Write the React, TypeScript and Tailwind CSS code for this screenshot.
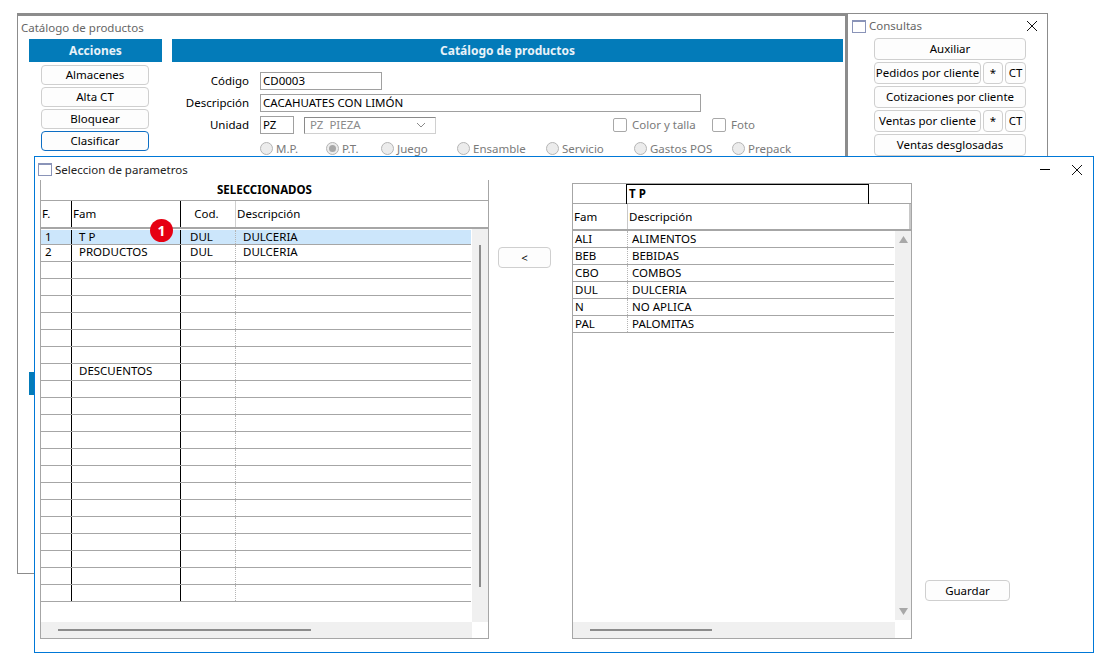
import React from 'react';

const acciones = ['Almacenes', 'Alta CT', 'Bloquear'];

const radios = [
  { label: 'M.P.', w: 'w-[66px]' },
  { label: 'P.T.', w: 'w-[55px]', checked: true },
  { label: 'Juego', w: 'w-[76px]' },
  { label: 'Ensamble', w: 'w-[89px]' },
  { label: 'Servicio', w: 'w-[88px]' },
  { label: 'Gastos POS', w: 'w-[98px]' },
  { label: 'Prepack', w: 'w-[70px]' },
];

const selRows = [
  { f: '1', fam: 'T P', cod: 'DUL', desc: 'DULCERIA' },
  { f: '2', fam: 'PRODUCTOS', cod: 'DUL', desc: 'DULCERIA' },
  { f: '', fam: '', cod: '', desc: '' },
  { f: '', fam: '', cod: '', desc: '' },
  { f: '', fam: '', cod: '', desc: '' },
  { f: '', fam: '', cod: '', desc: '' },
  { f: '', fam: '', cod: '', desc: '' },
  { f: '', fam: '', cod: '', desc: '' },
  { f: '', fam: 'DESCUENTOS', cod: '', desc: '' },
  ...Array.from({ length: 13 }, () => ({ f: '', fam: '', cod: '', desc: '' })),
];

const familias = [
  ['ALI', 'ALIMENTOS'],
  ['BEB', 'BEBIDAS'],
  ['CBO', 'COMBOS'],
  ['DUL', 'DULCERIA'],
  ['N', 'NO APLICA'],
  ['PAL', 'PALOMITAS'],
];

function Btn({ children, className = '' }: { children: React.ReactNode; className?: string }) {
  return (
    <div className={`flex items-center justify-center rounded-[4px] border border-[#cfcfcf] bg-[#fdfdfd] text-black ${className}`}>
      {children}
    </div>
  );
}

function Radio({ label, w, checked }: { label: string; w: string; checked?: boolean }) {
  return (
    <div className={`flex items-center gap-[3px] ${w}`}>
      <span className="flex h-[13px] w-[13px] items-center justify-center rounded-full border border-[#b5b5b5] bg-[#ececec]">
        {checked && <span className="h-[7px] w-[7px] rounded-full bg-[#a8a8a8]" />}
      </span>
      <span>{label}</span>
    </div>
  );
}

function WinIcon() {
  return <span className="h-[13px] w-[14px] border border-[#8a94b8] border-t-2 bg-white" />;
}

function CloseX({ size = 12 }: { size?: number }) {
  return (
    <svg width={size} height={size} viewBox="0 0 12 12" stroke="#111" strokeWidth="1" fill="none">
      <path d="M1 1 L11 11 M11 1 L1 11" />
    </svg>
  );
}

export default function App() {
  return (
    <div className="relative h-[662px] w-[1113px] overflow-hidden bg-white font-['Noto_Sans',sans-serif] text-[11.5px] text-black">
      {/* ventana de atras */}
      <div className="absolute left-[17px] top-[13px] h-[561px] w-[830px] border-b border-l border-r-2 border-t-[3px] border-[#8c8c8c] bg-white">
        <div className="h-[23px] pl-[3px] pt-[4px] leading-[16px] text-[#666]">Catálogo de productos</div>
        <div className="flex gap-[10px] pl-[11px]">
          <div className="w-[133px]">
            <div className="flex h-[23px] items-center justify-center bg-[#037bb9] text-[12px] font-bold text-[#e8f2f8]">Acciones</div>
            <div className="flex flex-col gap-[2px] pl-[12px] pt-[3px]">
              {acciones.map((a) => (
                <Btn key={a} className="h-[20px] w-[108px]">{a}</Btn>
              ))}
              <Btn className="h-[20px] w-[108px] !border-[#0d6ec4] bg-[#deecf9]">Clasificar</Btn>
            </div>
            <div className="mt-[221px] h-[23px] bg-[#037bb9]" />
          </div>
          <div className="w-[671px]">
            <div className="flex h-[23px] items-center justify-center bg-[#037bb9] text-[12px] font-bold text-[#e8f2f8]">Catálogo de productos</div>
            <div className="flex flex-col gap-[4px] pt-[10px]">
              <div className="flex items-center">
                <span className="w-[77px] text-right">Código</span>
                <span className="ml-[11px] h-[18px] w-[122px] border border-[#a0a0a0] pl-[2px] leading-[16px]">CD0003</span>
              </div>
              <div className="flex items-center">
                <span className="w-[77px] text-right">Descripción</span>
                <span className="ml-[11px] h-[18px] w-[441px] border border-[#a0a0a0] pl-[2px] leading-[16px]">CACAHUATES CON LIMÓN</span>
              </div>
              <div className="flex items-center">
                <span className="w-[77px] text-right">Unidad</span>
                <span className="ml-[11px] h-[18px] w-[34px] border border-[#a0a0a0] pl-[2px] leading-[16px]">PZ</span>
                <span className="ml-[10px] flex h-[17px] w-[132px] items-center justify-between border border-[#d0d0d0] border-l-[#8a8a8a] border-t-[#8a8a8a] pl-[5px] pr-[9px] text-[#8a8a8a]">
                  <span className="whitespace-pre">PZ  PIEZA</span>
                  <svg width="10" height="6" viewBox="0 0 10 6" fill="none" stroke="#8a8a8a"><path d="M1 1 L5 5 L9 1" /></svg>
                </span>
                <span className="ml-[177px] h-[14px] w-[14px] rounded-[2px] border border-[#a8a8a8]" />
                <span className="ml-[5px] w-[80px] text-[#7a7a7a]">Color y talla</span>
                <span className="h-[14px] w-[14px] rounded-[2px] border border-[#a8a8a8]" />
                <span className="ml-[5px] text-[#7a7a7a]">Foto</span>
              </div>
              <div className="flex items-center pl-[88px] pt-[2px] text-[#7a7a7a]">
                {radios.map((r) => (
                  <Radio key={r.label} {...r} />
                ))}
              </div>
            </div>
          </div>
        </div>
      </div>

      {/* Consultas */}
      <div className="absolute left-[847px] top-[13px] h-[160px] w-[201px] border border-[#8c8c8c] bg-white">
        <div className="flex h-[24px] items-center pl-[4px] pr-[9px] text-[#666]">
          <WinIcon />
          <span className="ml-[3px] flex-1">Consultas</span>
          <CloseX />
        </div>
        <div className="flex w-[152px] flex-col gap-[2px] ml-[26px]">
          <Btn className="h-[22px]">Auxiliar</Btn>
          <div className="flex h-[22px] gap-[2px]">
            <Btn className="w-[107px]">Pedidos por cliente</Btn>
            <Btn className="w-[20px]">*</Btn>
            <Btn className="w-[21px]">CT</Btn>
          </div>
          <Btn className="h-[22px]">Cotizaciones por cliente</Btn>
          <div className="flex h-[22px] gap-[2px]">
            <Btn className="w-[107px]">Ventas por cliente</Btn>
            <Btn className="w-[20px]">*</Btn>
            <Btn className="w-[21px]">CT</Btn>
          </div>
          <Btn className="h-[22px]">Ventas desglosadas</Btn>
        </div>
      </div>

      {/* dialogo */}
      <div className="absolute left-[34px] top-[156px] h-[497px] w-[1060px] border border-[#0078d7] bg-white">
        <div className="flex h-[23px] items-center pl-[3px] pr-[10px] pt-[2px]">
          <WinIcon />
          <span className="ml-[3px] flex-1 text-[#222]">Seleccion de parametros</span>
          <span className="mr-[21px] h-px w-[10px] bg-black" />
          <CloseX />
        </div>
        <div className="flex pl-[5px]">
          {/* tabla izquierda */}
          <div className="mr-[9px] flex h-[459px] w-[449px] flex-col border-b border-l border-r border-[#a6a6a6]">
            <div className="flex h-[21px] items-center justify-center border-b border-[#a6a6a6] text-[11.5px] font-bold">SELECCIONADOS</div>
            <div className="grid h-[28px] grid-cols-[30px_109px_55px_1fr] border-b-2 border-[#a6a6a6]">
              <div className="flex items-center pl-[1px]">F.</div>
              <div className="flex items-center border-l border-black pl-[1px]">Fam</div>
              <div className="flex items-center justify-center border-l border-black pr-[3px]">Cod.</div>
              <div className="flex items-center border-l border-[#cfcfcf] pl-[1px]">Descripción</div>
            </div>
            <div className="flex min-h-0 flex-1">
              <div className="relative flex h-[391px] w-[431px] flex-col pt-px">
                {selRows.map((r, i) => (
                  <div
                    key={i}
                    className={`grid grid-cols-[30px_109px_55px_1fr] border-b border-[#a6a6a6] leading-[14px] ${i === 0 ? 'h-[15px] bg-[#cce6fb]' : 'h-[17px]'}`}
                  >
                    <div className="pl-[4px]">{r.f}</div>
                    <div className="border-l border-black pl-[7px]">{r.fam}</div>
                    <div className="border-l border-black pl-[9px]">{r.cod}</div>
                    <div className="border-l border-dotted border-[#b5b5b5] pl-[7px]">{r.desc}</div>
                  </div>
                ))}
                {/* badge */}
                <div className="absolute left-[109px] top-[-10px] flex h-[23px] w-[23px] items-center justify-center rounded-full bg-[#e60012] text-[14px] font-bold text-white">1</div>
              </div>
              <div className="ml-px w-[16px] bg-[#f0f0f0] pl-[7px] pt-[16px]">
                <div className="h-[342px] w-[2px] bg-[#8c8c8c]" />
              </div>
            </div>
            <div className="flex h-[16px]">
              <div className="w-[431px] bg-[#f0f0f0] pl-[17px] pt-[7px]">
                <div className="h-[2px] w-[253px] bg-[#8c8c8c]" />
              </div>
            </div>
          </div>

          <Btn className="mt-[67px] h-[21px] w-[53px]">&lt;</Btn>

          {/* tabla derecha */}
          <div className="ml-[21px] mt-[3px] flex h-[456px] w-[340px] flex-col border-b border-l border-r border-t border-[#a6a6a6]">
            <div className="flex h-[20px] border-b border-[#a6a6a6]">
              <div className="ml-[53px] h-[20px] w-[243px] border-l border-r border-t border-black pl-[2px] text-[11.5px] font-bold leading-[18px]">T P</div>
            </div>
            <div className="flex h-[27px] border-b-2 border-[#a6a6a6]">
              <div className="flex w-[54px] items-center pl-[1px]">Fam</div>
              <div className="flex flex-1 items-center border-l border-r-2 border-[#c8c8c8] pl-[1px]">Descripción</div>
            </div>
            <div className="flex min-h-0 flex-1">
              <div className="flex h-[391px] w-[322px] flex-col">
                {familias.map(([c, d]) => (
                  <div key={c} className="flex h-[17px] border-b border-[#a6a6a6] leading-[16px]">
                    <div className="w-[54px] pl-[2px]">{c}</div>
                    <div className="flex-1 border-l border-dotted border-[#b5b5b5] pl-[4px]">{d}</div>
                  </div>
                ))}
              </div>
              <div className="ml-px flex h-[389px] w-[16px] flex-col items-center justify-between bg-[#f0f0f0] py-[5px]">
                <svg width="9" height="7" viewBox="0 0 9 7" fill="#a8a8a8"><path d="M4.5 0 L9 7 L0 7 Z" /></svg>
                <svg width="9" height="7" viewBox="0 0 9 7" fill="#a8a8a8"><path d="M4.5 7 L9 0 L0 0 Z" /></svg>
              </div>
            </div>
            <div className="h-[16px] w-[322px] bg-[#f0f0f0] pl-[17px] pt-[7px]">
              <div className="h-[2px] w-[122px] bg-[#8c8c8c]" />
            </div>
          </div>

          <Btn className="ml-[13px] mt-[400px] h-[21px] w-[85px]">Guardar</Btn>
        </div>
      </div>
    </div>
  );
}
